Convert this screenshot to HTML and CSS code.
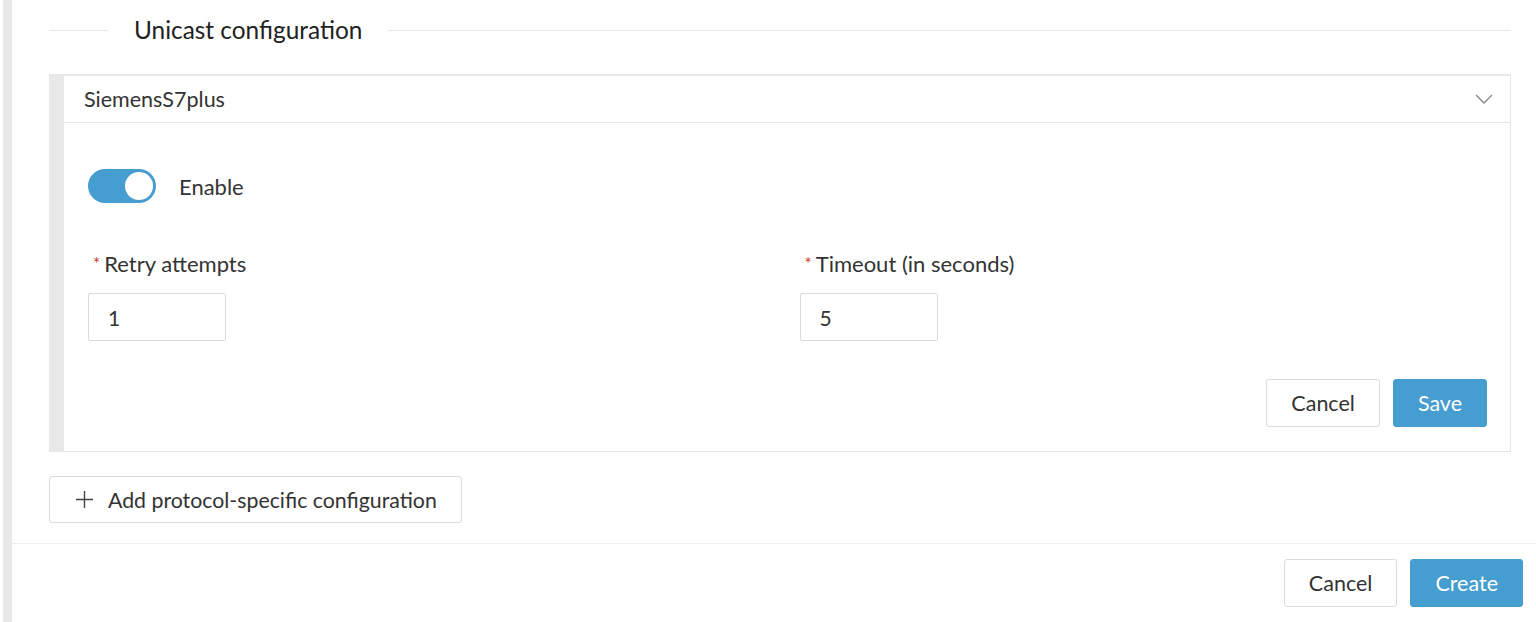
FILE: index.html
```html
<!DOCTYPE html>
<html lang="en">
<head>
    <meta charset="UTF-8">
    <meta name="viewport" content="width=device-width, initial-scale=1.0">
    <title>Unicast configuration</title>
    <link rel="stylesheet" href="styles.css">
</head>
<body>

<div class="page">
    <div class="rail"></div>

    <div class="main">
        <div class="content">
            <div class="divider">
                <span class="divider-line short"></span>
                <h2>Unicast configuration</h2>
                <span class="divider-line"></span>
            </div>

            <div class="panel">
                <div class="panel-header">
                    <span>SiemensS7plus</span>
                    <svg class="chevron" width="18" height="10" viewBox="0 0 18 10">
                        <path d="M1 1 L9 9 L17 1" fill="none" stroke="#8a8a8a" stroke-width="1.4"/>
                    </svg>
                </div>

                <div class="panel-body">
                    <label class="switch-row">
                        <span class="switch on"><span class="knob"></span></span>
                        Enable
                    </label>

                    <div class="fields">
                        <div class="field">
                            <label for="retry"><span class="req">*</span>Retry attempts</label>
                            <input id="retry" type="text" value="1">
                        </div>
                        <div class="field">
                            <label for="timeout"><span class="req">*</span>Timeout (in seconds)</label>
                            <input id="timeout" type="text" value="5">
                        </div>
                    </div>

                    <div class="actions">
                        <button class="btn">Cancel</button>
                        <button class="btn primary">Save</button>
                    </div>
                </div>
            </div>

            <button class="btn add-btn">
                <svg width="17" height="17" viewBox="0 0 17 17">
                    <path d="M8.5 0 V17 M0 8.5 H17" stroke="#444" stroke-width="1.4"/>
                </svg>
                Add protocol-specific configuration
            </button>
        </div>

        <div class="footer">
            <button class="btn">Cancel</button>
            <button class="btn primary">Create</button>
        </div>
    </div>
</div>

</body>
</html>
```

FILE: styles.css
```css
body {
    font-family: Lato, "Open Sans", Arial, sans-serif;
    margin: 0;
    color: #333;
    background-color: #fff;
}
.page {
    display: flex;
    height: 100vh;
}
.rail {
    width: 9px;
    margin-left: 3px;
    background-color: #e9e9e9;
}
.main {
    flex-grow: 1;
    display: flex;
    flex-direction: column;
}
.content {
    flex-grow: 1;
    padding: 16px 25px 0 37px;
}
.divider {
    display: flex;
    align-items: center;
    gap: 26px;
}
.divider h2 {
    margin: 0;
    font-size: 24.4px;
    font-weight: 400;
    line-height: 28px;
    color: #222;
}
.divider-line {
    flex-grow: 1;
    height: 1px;
    background-color: #e8e8e8;
}
.divider-line.short {
    flex: 0 0 59px;
}
.panel {
    margin-top: 30px;
    border-top: 2px solid #e8e8e8;
    border-left: 15px solid #e8e8e8;
    border-right: 1px solid #e6e6e6;
    border-bottom: 1px solid #e6e6e6;
}
.panel-header {
    height: 46px;
    display: flex;
    align-items: center;
    justify-content: space-between;
    padding: 0 17px 0 20px;
    font-size: 21.5px;
    border-bottom: 1px solid #e6e6e6;
}
.chevron {
    display: block;
}
.panel-body {
    padding: 46px 23px 24px 24px;
}
.switch-row {
    display: flex;
    align-items: center;
    gap: 23px;
    font-size: 22px;
    margin-bottom: 49px;
}
.switch {
    width: 68px;
    height: 34px;
    border-radius: 17px;
    background-color: #469dd0;
    position: relative;
}
.switch .knob {
    position: absolute;
    top: 3px;
    right: 3px;
    width: 28px;
    height: 28px;
    border-radius: 50%;
    background-color: #fff;
}
.fields {
    display: grid;
    grid-template-columns: 1fr 1fr;
    gap: 24px;
}
.field label {
    display: block;
    font-size: 22px;
    line-height: 24px;
    padding-left: 5px;
    margin-bottom: 17px;
    color: #333;
}
.req {
    color: #c8402e;
    font-size: 17px;
    vertical-align: top;
    margin-right: 4px;
}
.field input {
    width: 138px;
    height: 48px;
    box-sizing: border-box;
    border: 1px solid #dcdcdc;
    border-radius: 2px;
    padding: 0 19px;
    font-family: inherit;
    font-size: 21px;
    color: #333;
}
.actions {
    display: flex;
    justify-content: flex-end;
    gap: 13px;
    margin-top: 38px;
}
.btn {
    height: 48px;
    padding: 0 24px;
    border: 1px solid #dcdcdc;
    border-radius: 3px;
    background-color: #fff;
    color: #333;
    font-family: inherit;
    font-size: 21.5px;
    cursor: pointer;
}
.btn.primary {
    background-color: #469dd0;
    border-color: #469dd0;
    color: #fff;
}
.add-btn {
    margin-top: 24px;
    height: 47px;
    padding: 0 24px 0 26px;
    display: flex;
    align-items: center;
    gap: 15px;
    font-size: 21.3px;
}
.footer {
    border-top: 1px solid #ececec;
    padding: 15px 13px 15px 0;
    display: flex;
    justify-content: flex-end;
    gap: 13px;
}
```
